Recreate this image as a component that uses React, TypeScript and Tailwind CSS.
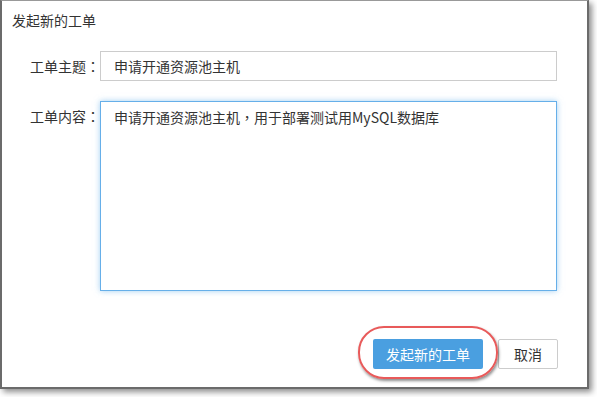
import React from "react";

const tc = { fontFamily: '"Noto Sans CJK TC", "Noto Sans CJK SC", sans-serif' };

export default function App() {
  const font = { fontFamily: '"Noto Sans CJK SC", "Noto Sans", sans-serif' };
  return (
    <div className="w-[597px] h-[397px] bg-white relative overflow-hidden" style={font}>
      <div className="w-[589px] h-[389px] bg-white border-t border-t-[#999] border-l-2 border-r-2 border-b-2 border-[#6b6b6b] shadow-[3px_3px_6px_rgba(0,0,0,0.45)] flex flex-col relative">
        <div className="pl-[10px] pt-[9px] text-[14px] leading-[20px] text-[#333]">发起新的工单</div>
        <div className="mt-[21px] flex items-center">
          <div className="w-[98px] pl-[28px] text-[14px] leading-[20px] text-[#333] whitespace-nowrap">
            工单主题<span style={tc}>：</span>
          </div>
          <div className="w-[457px] h-[30px] border border-[#ccc] flex items-center pl-[13px] text-[14px] text-[#333]">
            申请开通资源池主机
          </div>
        </div>
        <div className="mt-[20px] flex items-start">
          <div className="w-[98px] pl-[28px] pt-[5px] text-[14px] leading-[20px] text-[#333] whitespace-nowrap">
            工单内容<span style={tc}>：</span>
          </div>
          <div className="w-[457px] h-[190px] border border-[#66afe9] shadow-[0_0_6px_rgba(102,175,233,0.6)] pl-[13px] pt-[5px] text-[14px] leading-[20px] text-[#333]">
            申请开通资源池主机<span style={tc}>，</span>用于部署测试用MySQL数据库
          </div>
        </div>
        <div className="mt-[48px] flex justify-end gap-[15px] pr-[29px]">
          <div className="relative">
            <div className="w-[110px] h-[30px] bg-[#4a9fe0] rounded-[2px] text-white text-[14px] flex items-center justify-center">
              发起新的工单
            </div>
            <div className="absolute left-[-15px] top-[-13px] w-[140px] h-[53px] rounded-[26px] border-2 border-[#e85a5a] shadow-[1px_2px_3px_rgba(0,0,0,0.45)]" />
          </div>
          <div className="w-[60px] h-[30px] border border-[#ccc] bg-white rounded-[2px] text-[#333] text-[14px] flex items-center justify-center">
            取消
          </div>
        </div>
      </div>
    </div>
  );
}
